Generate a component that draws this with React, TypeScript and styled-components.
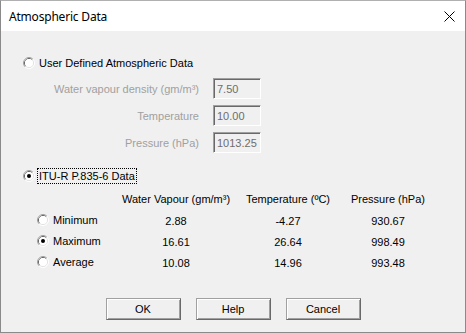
import * as React from 'react';
import styled, { createGlobalStyle } from 'styled-components';

const GlobalStyle = createGlobalStyle`
  html, body {
    margin: 0;
    padding: 0;
    background: #ffffff;
  }
  body {
    font-family: "Liberation Sans", Arial, sans-serif;
    font-size: 11px;
    color: #000;
  }
`;

type Row = {
  label: string,
  vapour: string,
  temp: string,
  pressure: string,
  checked: boolean,
}

const rows: Row[] = [
  { label: 'Minimum', vapour: '2.88', temp: '-4.27', pressure: '930.67', checked: false },
  { label: 'Maximum', vapour: '16.61', temp: '26.64', pressure: '998.49', checked: true },
  { label: 'Average', vapour: '10.08', temp: '14.96', pressure: '993.48', checked: false },
];

const userFields = [
  { label: 'Water vapour density (gm/m³)', value: '7.50' },
  { label: 'Temperature', value: '10.00' },
  { label: 'Pressure (hPa)', value: '1013.25' },
];

const Window = styled.div`
  width: 466px;
  height: 333px;
  box-sizing: border-box;
  border: 1px solid #8a8a8a;
  border-top-color: #b0b0b0;
  background: #f0f0f0;
  display: flex;
  flex-direction: column;
`;

const TitleBar = styled.div`
  height: 30px;
  background: #fff;
  display: flex;
  align-items: center;
  justify-content: space-between;
  padding: 0 10px 0 8px;
  font-family: "Noto Sans", "Open Sans", sans-serif;
  font-size: 12px;
  letter-spacing: -0.2px;
`;

const Body = styled.div`
  flex: 1;
  display: flex;
  flex-direction: column;
  padding: 25px 0 0 22px;
`;

const RadioLine = styled.label`
  display: flex;
  align-items: center;
  gap: 4px;
  height: 13px;
`;

const FocusLabel = styled.span<{ $focused?: boolean }>`
  padding: 1px 1px;
  border: 1px dotted ${p => (p.$focused ? '#000' : 'transparent')};
  margin-left: -2px;
`;

const FieldGrid = styled.div`
  display: grid;
  grid-template-columns: 176px 48px;
  column-gap: 14px;
  row-gap: 6px;
  margin-top: 9px;
  align-items: center;
`;

const FieldLabel = styled.span`
  color: #a0a0a0;
  text-align: right;
`;

const FieldBox = styled.div`
  height: 21px;
  box-sizing: border-box;
  border: 1px solid;
  border-color: #a0a0a0 #fff #fff #a0a0a0;
  box-shadow: inset 1px 1px 0 #696969;
  display: flex;
  align-items: center;
  padding-left: 3px;
  color: #6d6d6d;
  background: #f0f0f0;
`;

const SectionGap = styled.div`
  height: 16px;
`;

const Table = styled.div`
  display: grid;
  grid-template-columns: 84px 110px 114px 86px;
  grid-auto-rows: 21px;
  margin: 6px 0 0 14px;
  align-items: center;
`;

const HeadCell = styled.span`
  justify-self: center;
`;

const ValueCell = styled.span`
  justify-self: center;
  padding-top: 2px;
`;

const ButtonRow = styled.div`
  display: flex;
  justify-content: center;
  gap: 15px;
  margin-top: auto;
  margin-bottom: 12px;
  margin-left: -22px;
`;

const Button = styled.button`
  width: 75px;
  height: 22px;
  box-sizing: border-box;
  font-family: "Liberation Sans", Arial, sans-serif;
  font-size: 11px;
  color: #000;
  background: #f0f0f0;
  border: 1px solid;
  border-color: #a0a0a0 #696969 #696969 #a0a0a0;
  box-shadow: inset 1px 1px 0 #fff, inset -1px -1px 0 #a0a0a0;
  padding: 0;
`;

const Radio = ({ checked }: { checked: boolean }) => (
  <svg width="12" height="12" viewBox="0 0 12 12">
    <path d="M2.11 9.89 A5.5 5.5 0 0 1 9.89 2.11" fill="none" stroke="#a0a0a0" />
    <path d="M9.89 2.11 A5.5 5.5 0 0 1 2.11 9.89" fill="none" stroke="#ffffff" />
    <path d="M2.82 9.18 A4.5 4.5 0 0 1 9.18 2.82" fill="none" stroke="#696969" />
    <path d="M9.18 2.82 A4.5 4.5 0 0 1 2.82 9.18" fill="none" stroke="#e3e3e3" />
    <circle cx="6" cy="6" r="4" fill="#fff" />
    {checked && <circle cx="6" cy="6" r="2" fill="#000" />}
  </svg>
);

const CloseIcon = () => (
  <svg width="11" height="11" viewBox="0 0 11 11">
    <path d="M0.5 0.5 L10.5 10.5 M10.5 0.5 L0.5 10.5" stroke="#000" strokeWidth="1" />
  </svg>
);

const App = (): React.ReactElement => (
  <>
    <GlobalStyle />
    <Window>
      <TitleBar>
        <span>Atmospheric Data</span>
        <CloseIcon />
      </TitleBar>
      <Body>
        <RadioLine>
          <Radio checked={false} />
          <FocusLabel>User Defined Atmospheric Data</FocusLabel>
        </RadioLine>
        <FieldGrid>
          {userFields.map(f => (
            <React.Fragment key={f.label}>
              <FieldLabel>{f.label}</FieldLabel>
              <FieldBox>{f.value}</FieldBox>
            </React.Fragment>
          ))}
        </FieldGrid>
        <SectionGap />
        <RadioLine>
          <Radio checked />
          <FocusLabel $focused>ITU-R P.835-6 Data</FocusLabel>
        </RadioLine>
        <Table>
          <span />
          <HeadCell>Water Vapour (gm/m³)</HeadCell>
          <HeadCell>Temperature (ºC)</HeadCell>
          <HeadCell>Pressure (hPa)</HeadCell>
          {rows.map(r => (
            <React.Fragment key={r.label}>
              <RadioLine>
                <Radio checked={r.checked} />
                <FocusLabel>{r.label}</FocusLabel>
              </RadioLine>
              <ValueCell>{r.vapour}</ValueCell>
              <ValueCell>{r.temp}</ValueCell>
              <ValueCell>{r.pressure}</ValueCell>
            </React.Fragment>
          ))}
        </Table>
        <ButtonRow>
          <Button>OK</Button>
          <Button>Help</Button>
          <Button>Cancel</Button>
        </ButtonRow>
      </Body>
    </Window>
  </>
);

export default App;
